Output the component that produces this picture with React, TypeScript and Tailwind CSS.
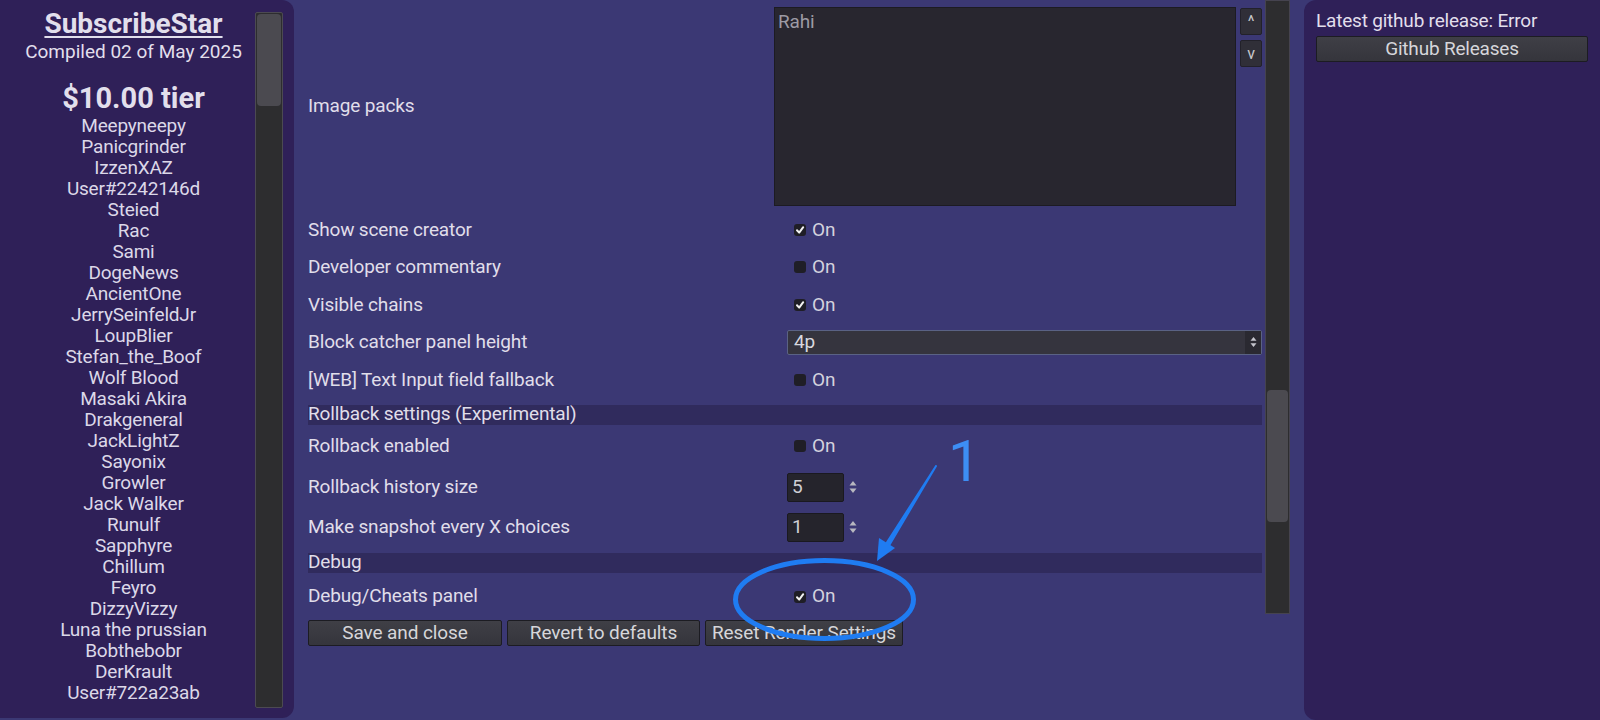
import React from 'react';

const NAMES = [
  'Meepyneepy', 'Panicgrinder', 'IzzenXAZ', 'User#2242146d', 'Steied', 'Rac', 'Sami', 'DogeNews',
  'AncientOne', 'JerrySeinfeldJr', 'LoupBlier', 'Stefan_the_Boof', 'Wolf Blood', 'Masaki Akira',
  'Drakgeneral', 'JackLightZ', 'Sayonix', 'Growler', 'Jack Walker', 'Runulf', 'Sapphyre', 'Chillum',
  'Feyro', 'DizzyVizzy', 'Luna the prussian', 'Bobthebobr', 'DerKrault', 'User#722a23ab',
];

const CheckBox = ({ on }: { on: boolean }) => (
  <div className="ml-[20px] flex items-center gap-[6px]">
    <span className="flex h-[12px] w-[12px] items-center justify-center rounded-[3px] bg-[#1f1e26]">
      {on && (
        <svg width="10" height="10" viewBox="0 0 10 10">
          <path d="M2 5.2 L4.2 7.6 L8.2 2.2" fill="none" stroke="#f2f2f2" strokeWidth="2" strokeLinecap="round" strokeLinejoin="round" />
        </svg>
      )}
    </span>
    <span className="text-[#d4d2de]">On</span>
  </div>
);

const NumberBox = ({ value }: { value: string }) => (
  <div className="ml-[13px] flex items-center gap-[5px]">
    <div className="flex h-[29px] w-[57px] items-center rounded-[2px] border border-[#1a1920] bg-[#25242c] pl-[4px] text-[#cfcfd4]">
      {value}
    </div>
    <svg width="8" height="14" viewBox="0 0 8 14">
      <path d="M4 1 L7.5 5.5 H0.5 Z" fill="#b8b8c0" />
      <path d="M4 13 L7.5 8.5 H0.5 Z" fill="#b8b8c0" />
    </svg>
  </div>
);

const Row = ({ label, children }: { label: string; children?: React.ReactNode }) => (
  <div className="flex h-[37.5px] items-center">
    <div className="w-[466px] shrink-0">{label}</div>
    {children}
  </div>
);

const Header = ({ label }: { label: string }) => (
  <div className="h-[20px] bg-[#302b5d] leading-[18px]">{label}</div>
);

const Btn = ({ label, w }: { label: string; w: string }) => (
  <button className={`${w} h-[26px] rounded-[2px] border border-[#1c1c22] bg-gradient-to-b from-[#3f3f46] to-[#35353c] text-[19px] leading-[22px] tracking-[-0.1px] text-[#d6d6da]`}>
    {label}
  </button>
);

export default function App() {
  return (
    <div className="relative flex h-[720px] w-[1600px] overflow-hidden bg-[#3b3874] font-['Roboto',sans-serif] text-[#e2dfec]">
      {/* supporters panel */}
      <div className="flex h-[718px] w-[294px] shrink-0 rounded-r-[12px] bg-[#2f2058]">
        <div className="h-[710px] w-[255px] overflow-hidden pl-[12px] pt-[7px] text-center">
          <div className="text-[28px] font-bold leading-[34px] underline decoration-[1.5px] underline-offset-[3px]">SubscribeStar</div>
          <div className="mt-[-1px] text-[19px] leading-[24px]">Compiled 02 of May 2025</div>
          <div className="mt-[18px] text-[29px] font-bold leading-[32px]">$10.00 tier</div>
          <div className="mt-[1px] text-[19px] leading-[21px] tracking-[-0.2px] text-[#dcd8e8]">
            {NAMES.map(n => (
              <div key={n}>{n}</div>
            ))}
          </div>
        </div>
        <div className="mt-[12px] h-[696px] w-[28px] rounded-[2px] border border-[#4c4a52] bg-[#2d2d2f] p-[1px]">
          <div className="h-[92px] w-full rounded-[4px] bg-[#4b4a50]" />
        </div>
      </div>

      {/* settings */}
      <div className="flex w-[1010px] shrink-0 pl-[14px]">
        <div className="w-[954px] shrink-0 text-[19px] tracking-[-0.15px] text-[#e0deea]">
          <div className="flex h-[211px] items-start pt-[7px]">
            <div className="w-[466px] shrink-0 self-center pb-[6px]">Image packs</div>
            <div className="h-[199px] w-[462px] border border-[#1c1b22] bg-[#28262f] pl-[3px] text-[#9c9aa4]">Rahi</div>
            <div className="ml-[4px] flex flex-col gap-[5px] pt-[1px]">
              <div className="flex h-[27px] w-[22px] items-center justify-center rounded-[2px] border border-[#22212a] bg-[#302f38] text-[16px] text-[#c8c8cc]">^</div>
              <div className="flex h-[27px] w-[22px] items-center justify-center rounded-[2px] border border-[#22212a] bg-[#302f38] text-[16px] text-[#c8c8cc]">v</div>
            </div>
          </div>
          <Row label="Show scene creator"><CheckBox on /></Row>
          <Row label="Developer commentary"><CheckBox on={false} /></Row>
          <Row label="Visible chains"><CheckBox on /></Row>
          <Row label="Block catcher panel height">
            <div className="ml-[13px] flex h-[25px] w-[475px] items-center rounded-[2px] border border-[#5a6284] bg-[#35343e]">
              <span className="flex-1 pl-[6px] text-[#d8d8de]">4p</span>
              <span className="flex h-full w-[16px] items-center justify-center bg-[#2a2931]">
                <svg width="7" height="12" viewBox="0 0 7 12">
                  <path d="M3.5 1 L6.5 4.8 H0.5 Z" fill="#c4c4cc" />
                  <path d="M3.5 11 L6.5 7.2 H0.5 Z" fill="#c4c4cc" />
                </svg>
              </span>
            </div>
          </Row>
          <Row label="[WEB] Text Input field fallback"><CheckBox on={false} /></Row>
          <div className="mt-[6.5px]">
            <Header label="Rollback settings (Experimental)" />
          </div>
          <div className="flex h-[42px] items-center">
            <div className="w-[466px] shrink-0">Rollback enabled</div>
            <CheckBox on={false} />
          </div>
          <div className="flex h-[40px] items-center">
            <div className="w-[466px] shrink-0">Rollback history size</div>
            <NumberBox value="5" />
          </div>
          <div className="flex h-[40px] items-center">
            <div className="w-[466px] shrink-0">Make snapshot every X choices</div>
            <NumberBox value="1" />
          </div>
          <div className="mt-[6px]">
            <Header label="Debug" />
          </div>
          <div className="flex h-[47px] items-center">
            <div className="w-[466px] shrink-0">Debug/Cheats panel</div>
            <CheckBox on />
          </div>
          <div className="flex gap-[5px]">
            <Btn label="Save and close" w="w-[194px]" />
            <Btn label="Revert to defaults" w="w-[193px]" />
            <Btn label="Reset Render Settings" w="w-[198px]" />
          </div>
        </div>
        <div className="ml-[3px] h-[614px] w-[25px] shrink-0 border border-[#45434f] bg-[#2d2d2f] px-[1px] pt-[389px]">
          <div className="h-[132px] w-full rounded-[4px] bg-[#4b4a50]" />
        </div>
      </div>

      {/* release panel */}
      <div className="h-[720px] flex-1 rounded-l-[12px] bg-[#2f2058] pl-[12px] pr-[12px] pt-[8px] text-[19px] tracking-[-0.2px]">
        <div className="leading-[26px]">Latest github release: Error</div>
        <button className="mt-[2px] h-[26px] w-full rounded-[2px] border border-[#1c1c22] bg-gradient-to-b from-[#3f3f46] to-[#35353c] text-[19px] leading-[22px] text-[#d6d6da]">
          Github Releases
        </button>
      </div>

      {/* annotation overlay */}
      <svg className="pointer-events-none absolute left-0 top-0" width="1600" height="720" viewBox="0 0 1600 720">
        <ellipse cx="824.5" cy="599.5" rx="89" ry="39" fill="none" stroke="#1f7cf2" strokeWidth="5" />
        <path d="M936 466 L884 547 L887 549 Z" fill="#1f7cf2" stroke="#1f7cf2" strokeWidth="2" strokeLinejoin="round" />
        <path d="M877 561 L879 538 L895 548 Z" fill="#1f7cf2" />
      </svg>
      <div className="pointer-events-none absolute left-[948px] top-[428px] text-[58px] font-normal leading-[66px] text-[#3d8ef5]">1</div>
    </div>
  );
}
